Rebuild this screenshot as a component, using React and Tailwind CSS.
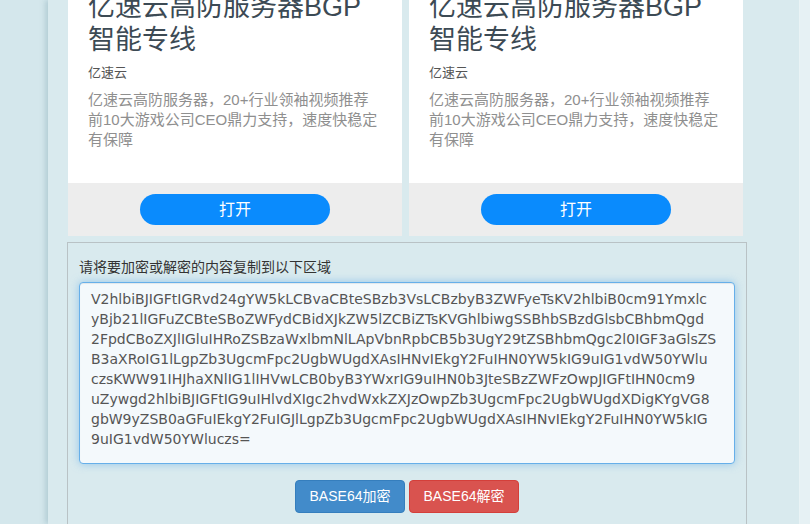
import React from "react";

const cards = [
    { title: ["亿速云高防服务器BGP", "智能专线"], vendor: "亿速云", desc: ["亿速云高防服务器，20+行业领袖视频推荐", "前10大游戏公司CEO鼎力支持，速度快稳定", "有保障"] },
    { title: ["亿速云高防服务器BGP", "智能专线"], vendor: "亿速云", desc: ["亿速云高防服务器，20+行业领袖视频推荐", "前10大游戏公司CEO鼎力支持，速度快稳定", "有保障"] },
];

const lines = [
    "V2hlbiBJIGFtIGRvd24gYW5kLCBvaCBteSBzb3VsLCBzbyB3ZWFyeTsKV2hlbiB0cm91Ymxlc",
    "yBjb21lIGFuZCBteSBoZWFydCBidXJkZW5lZCBiZTsKVGhlbiwgSSBhbSBzdGlsbCBhbmQgd",
    "2FpdCBoZXJlIGluIHRoZSBzaWxlbmNlLApVbnRpbCB5b3UgY29tZSBhbmQgc2l0IGF3aGlsZS",
    "B3aXRoIG1lLgpZb3UgcmFpc2UgbWUgdXAsIHNvIEkgY2FuIHN0YW5kIG9uIG1vdW50YWlu",
    "czsKWW91IHJhaXNlIG1lIHVwLCB0byB3YWxrIG9uIHN0b3JteSBzZWFzOwpJIGFtIHN0cm9",
    "uZywgd2hlbiBJIGFtIG9uIHlvdXIgc2hvdWxkZXJzOwpZb3UgcmFpc2UgbWUgdXDigKYgVG8",
    "gbW9yZSB0aGFuIEkgY2FuIGJlLgpZb3UgcmFpc2UgbWUgdXAsIHNvIEkgY2FuIHN0YW5kIG",
    "9uIG1vdW50YWluczs=",
];

function Card({ card }) {
    return (
        <div className="w-[334px] flex flex-col bg-white">
            <div className="px-[20px] pb-[33px]">
                <h3 className="-mt-[9px] text-[27px] leading-[33px] text-[#3c4a54]">
                    {card.title[0]}<br />{card.title[1]}
                </h3>
                <p className="mt-[7px] text-[13px] leading-[18px] text-[#555]">{card.vendor}</p>
                <p className="mt-[8px] text-[15px] leading-[20px] text-[#8f8f8f]">
                    {card.desc.map((d, i) => (
                        <span key={i} className="block whitespace-nowrap">{d}</span>
                    ))}
                </p>
            </div>
            <div className="bg-[#ededed] py-[11px] flex justify-center">
                <button className="w-[190px] h-[31px] rounded-full bg-[#0a8bfd] text-white text-[16px] leading-[31px]">打开</button>
            </div>
        </div>
    );
}

export default function App() {
    return (
        <div className="h-[524px] overflow-hidden flex bg-[#d5e8ed] font-['Liberation_Sans','Noto_Sans_CJK_SC',sans-serif]">
            <div className="w-[48px] shrink-0 bg-[#d4e7ec]" />
            <div className="w-[752px] shrink-0 bg-[#d9eaee] shadow-[-3px_0_5px_rgba(120,160,175,0.35)] border-r border-[#e9f3f5] pl-[19px]">
                <div className="flex gap-[7px] pl-[1px]">
                    {cards.map((c, i) => <Card key={i} card={c} />)}
                </div>

                <div className="mt-[6px] w-[680px] border border-[#b9c2c5] px-[11px] pt-[14px] pb-[30px]">
                    <label className="block text-[14px] leading-[20px] text-[#333] mb-[5px]">请将要加密或解密的内容复制到以下区域</label>
                    <textarea
                        readOnly
                        wrap="off"
                        value={lines.join("\n")}
                        className="block w-[656px] h-[182px] resize-none overflow-hidden whitespace-pre rounded-[4px] border border-[#66afe9] bg-[#f4f9fc] px-[11px] py-[6px] text-[14px] leading-[20px] text-[#555] font-['DejaVu_Sans',sans-serif] outline-none shadow-[inset_0_1px_1px_rgba(0,0,0,0.075),0_0_8px_rgba(102,175,233,0.6)]"
                    />
                    <div className="mt-[16px] flex justify-center gap-[4px]">
                        <button className="w-[110px] h-[33px] rounded-[4px] border border-[#357ebd] bg-[#428bca] text-white text-[14px]">BASE64加密</button>
                        <button className="w-[110px] h-[33px] rounded-[4px] border border-[#d43f3a] bg-[#d9534f] text-white text-[14px]">BASE64解密</button>
                    </div>
                </div>
            </div>
            <div className="flex-1 bg-[#e6f1f4]" />
        </div>
    );
}
